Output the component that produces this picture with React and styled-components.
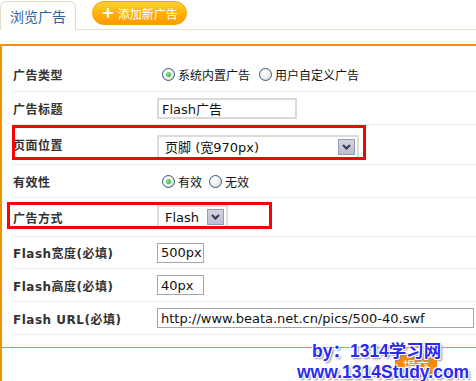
import React from 'react';
import styled, { createGlobalStyle } from 'styled-components';

const GlobalStyle = createGlobalStyle`
  html, body { margin: 0; padding: 0; background: #fff; }
  body {
    font-family: "DejaVu Sans", "Noto Sans CJK SC", sans-serif;
    font-size: 12px;
    color: #333;
  }
`;

const orange = '#f39200';

const Page = styled.div`
  position: relative;
  width: 476px;
  height: 381px;
  overflow: hidden;
`;

const TabBar = styled.div`
  display: flex;
  align-items: flex-start;
  box-sizing: border-box;
  height: 30px;
  padding-top: 1px;
  border-bottom: 1px solid #e6dfc9;
`;

const Tab = styled.div`
  display: flex;
  align-items: center;
  justify-content: center;
  box-sizing: border-box;
  width: 76px;
  height: 29px;
  border: 1px solid #e3dcc4;
  border-bottom: none;
  border-radius: 6px 6px 0 0;
  background: #fefefb;
  color: #2a64a6;
  font-size: 14px;
  font-family: "Noto Sans CJK SC", sans-serif;
`;

const AddButton = styled.div`
  display: flex;
  align-items: center;
  justify-content: center;
  gap: 3px;
  box-sizing: border-box;
  margin-left: 16px;
  width: 95px;
  height: 24px;
  border: 1px solid #f2a400;
  border-radius: 12px;
  background: linear-gradient(#ffd040, #ffb000 55%, #ff9800);
  color: #fff;
  font-size: 12px;
  font-family: "Noto Sans CJK SC", sans-serif;
`;

const Plus = styled.span`
  font-family: "DejaVu Sans", sans-serif;
  font-weight: bold;
  font-size: 16px;
  line-height: 1;
`;

const Spacer = styled.div`
  height: 14px;
`;

const Panel = styled.div`
  border-top: 2px solid ${orange};
  border-left: 2px solid ${orange};
  height: 340px;
`;

const Form = styled.div`
  padding: 12px 0 12px 11px;
`;

const Row = styled.div`
  position: relative;
  display: flex;
  align-items: center;
  box-sizing: border-box;
  height: ${p => p.$h}px;
  border-bottom: 1px solid #ececec;
`;

const Label = styled.div`
  flex: none;
  width: 144px;
  font-weight: bold;
  font-size: 12px;
  letter-spacing: 0.5px;
  color: #333;
`;

const Field = styled.div`
  display: flex;
  align-items: center;
`;

const Choice = styled.label`
  display: inline-flex;
  align-items: center;
  gap: 3px;
  margin-left: ${p => p.$ml}px;
  font-size: 12px;
  color: #111;
`;

const RadioDot = styled.span`
  position: relative;
  box-sizing: border-box;
  width: 13px;
  height: 13px;
  border-radius: 50%;
  border: 1px solid #2f5a86;
  background: radial-gradient(circle at 35% 35%, #fff 0%, #f2f2ee 45%, #cfcfc8 100%);
  &::after {
    content: '';
    display: ${p => (p.$on ? 'block' : 'none')};
    position: absolute;
    left: 3px;
    top: 3px;
    width: 5px;
    height: 5px;
    border-radius: 50%;
    background: radial-gradient(circle at 40% 40%, #8ee68e, #1ea11e);
  }
`;

const TextBox = styled.input`
  box-sizing: border-box;
  width: ${p => p.$w}px;
  height: ${p => p.$hgt || 21}px;
  margin: 0;
  padding: 0 0 0 3px;
  border: ${p => p.$light ? '2px solid #dadada' : '1px solid #a3a7ab'};
  background: #fff;
  font-family: "DejaVu Sans", "Noto Sans CJK SC", sans-serif;
  font-size: 13px;
  color: #111;
  outline: none;
`;

const SelectBox = styled.div`
  display: flex;
  align-items: center;
  justify-content: space-between;
  box-sizing: border-box;
  width: ${p => p.$w}px;
  height: ${p => p.$hgt}px;
  margin-top: ${p => p.$mt || 0}px;
  padding: 0 2px 0 6px;
  border: 2px solid #dcdcdc;
  background: #fff;
  font-size: 13px;
  color: #111;
`;

const DropButton = styled.span`
  display: flex;
  align-items: center;
  justify-content: center;
  box-sizing: border-box;
  width: 17px;
  height: 16px;
  border: 1px solid #989bb0;
  background: linear-gradient(#d3d5e4, #b9bcd2);
`;

const Mark = styled.div`
  position: absolute;
  left: ${p => p.$x}px;
  top: ${p => p.$y}px;
  width: ${p => p.$w}px;
  height: ${p => p.$hgt}px;
  box-sizing: border-box;
  border: 3px solid #ff0000;
  pointer-events: none;
`;

const Footer = styled.div`
  position: relative;
  border-top: 1px solid ${orange};
  padding: 5px 0 0 393px;
`;

const SubmitButton = styled.div`
  display: flex;
  align-items: center;
  justify-content: center;
  width: 42px;
  height: 24px;
  background: #fb8b04;
  color: #fff;
  font-size: 13px;
  font-family: "Noto Sans CJK SC", sans-serif;
`;

const Watermark = styled.div`
  position: absolute;
  left: 297px;
  top: 341px;
  font-family: "Liberation Sans", "Noto Sans CJK SC", sans-serif;
  font-weight: bold;
  font-size: 17.5px;
  line-height: 21px;
  color: #2b2bef;
  white-space: nowrap;
  text-shadow: -1px -1px 0 #fff, 1px -1px 0 #fff, -1px 1px 0 #fff, 1px 1px 0 #fff,
    2px 2px 2px #8a8a8a;
`;

const WatermarkLine = styled.div`
  padding-left: ${p => p.$indent || 0}px;
`;

const Chevron = () => (
  <svg width="9" height="6" viewBox="0 0 9 6">
    <polyline points="1,1 4.5,4.5 8,1" fill="none" stroke="#3a3a44" strokeWidth="2" />
  </svg>
);

const Radio = ({ on, ml, children }) => (
  <Choice $ml={ml}>
    <RadioDot $on={on} />
    {children}
  </Choice>
);

const Select = ({ w, hgt, mt, value }) => (
  <SelectBox $w={w} $hgt={hgt} $mt={mt}>
    <span>{value}</span>
    <DropButton><Chevron /></DropButton>
  </SelectBox>
);

export default function App() {
  return (
    <Page>
      <GlobalStyle />
      <TabBar>
        <Tab>浏览广告</Tab>
        <AddButton><Plus>+</Plus>添加新广告</AddButton>
      </TabBar>
      <Spacer />
      <Panel>
        <Form>
          <Row $h={34}>
            <Label>广告类型</Label>
            <Field>
              <Radio on ml={5}>系统内置广告</Radio>
              <Radio ml={9}>用户自定义广告</Radio>
            </Field>
          </Row>
          <Row $h={33}>
            <Label>广告标题</Label>
            <TextBox $w={140} $light readOnly value="Flash广告" />
          </Row>
          <Row $h={40}>
            <Label>页面位置</Label>
            <Select w={202} hgt={24} mt={4} value="页脚 (宽970px)" />
            <Mark $x={-1} $y={0} $w={354} $hgt={35} />
          </Row>
          <Row $h={33}>
            <Label>有效性</Label>
            <Field>
              <Radio on ml={5}>有效</Radio>
              <Radio ml={7}>无效</Radio>
            </Field>
          </Row>
          <Row $h={39}>
            <Label>广告方式</Label>
            <Select w={71} hgt={24} value="Flash" />
            <Mark $x={-6} $y={4} $w={265} $hgt={27} />
          </Row>
          <Row $h={32}>
            <Label>Flash宽度(必填)</Label>
            <TextBox $w={47} $hgt={20} readOnly value="500px" />
          </Row>
          <Row $h={33}>
            <Label>Flash高度(必填)</Label>
            <TextBox $w={47} $hgt={20} readOnly value="40px" />
          </Row>
          <Row $h={33}>
            <Label>Flash URL(必填)</Label>
            <TextBox $w={317} $hgt={20} readOnly value="http://www.beata.net.cn/pics/500-40.swf" />
          </Row>
        </Form>
        <Footer>
          <SubmitButton>提交</SubmitButton>
        </Footer>
      </Panel>
      <Watermark>
        <WatermarkLine $indent={15}>by：1314学习网</WatermarkLine>
        <WatermarkLine>www.1314Study.com</WatermarkLine>
      </Watermark>
    </Page>
  );
}
